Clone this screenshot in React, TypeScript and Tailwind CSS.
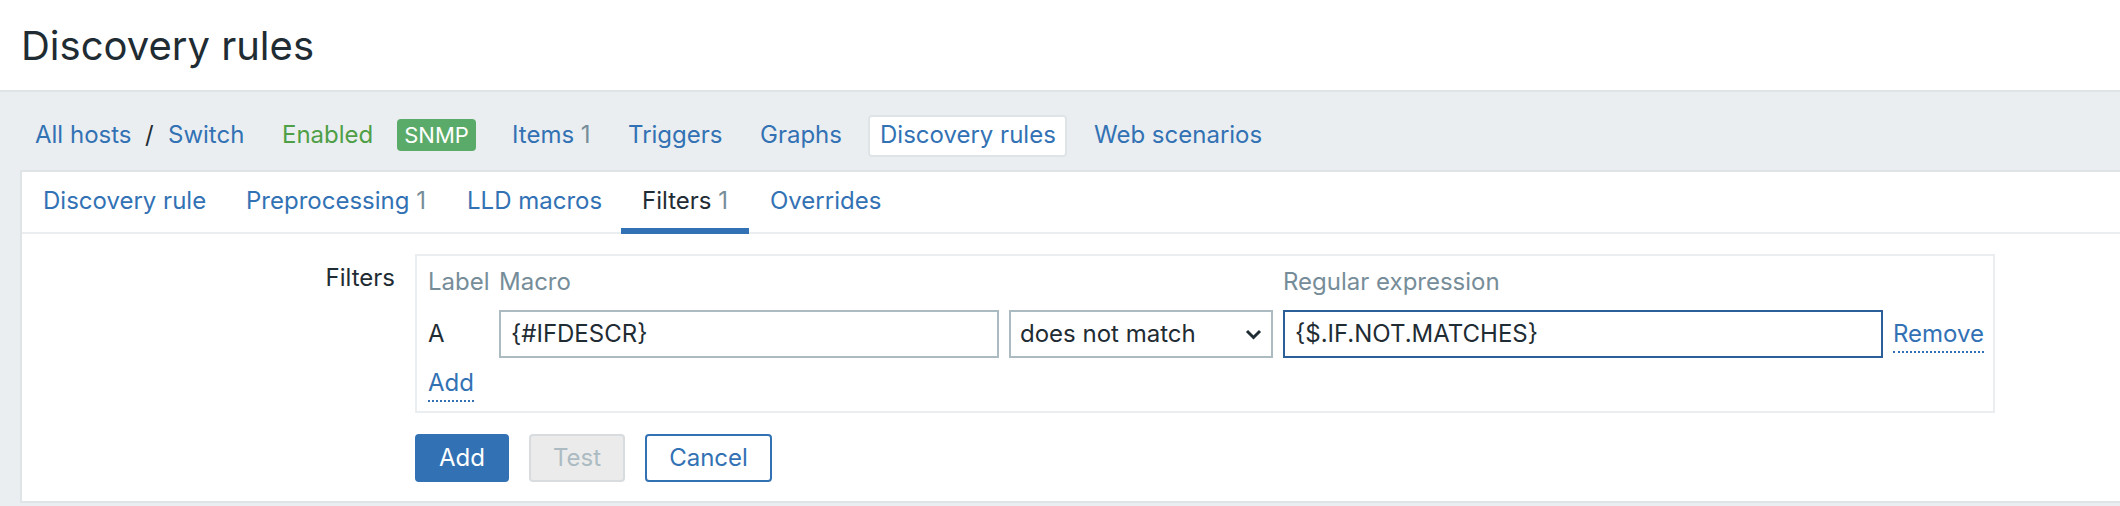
export default function App() {
  return (
    <div className="w-[2120px] h-[506px] overflow-hidden bg-white font-['Inter','Liberation_Sans',sans-serif] text-[24px] leading-[28px] text-[#1f2c33]">
      {/* page title */}
      <header className="h-[90px] pl-[21px] pt-[21px]">
        <h1 className="text-[40px] leading-[50px] font-normal">Discovery rules</h1>
      </header>

      <div className="bg-[#ebeef0] border-t-2 border-[#dfe4e7] h-[416px]">
        {/* host navigation */}
        <nav className="h-[78px] pt-[23px] pl-[35px] flex items-start">
          <a className="w-[110px] pt-[6px] text-[#3272b4]">All hosts</a>
          <span className="w-[23px] pt-[6px]">/</span>
          <a className="w-[114px] pt-[6px] text-[#3272b4]">Switch</a>
          <span className="w-[115px] pt-[6px] text-[#4f9f47]">Enabled</span>
          <span className="w-[79px] h-[32px] mt-[4px] rounded-[4px] bg-[#5aab69] text-white text-[22px] leading-[32px] text-center">
            SNMP
          </span>
          <a className="ml-[36px] w-[116px] pt-[6px] text-[#3272b4]">
            Items <span className="text-[#768d99]">1</span>
          </a>
          <a className="w-[132px] pt-[6px] text-[#3272b4]">Triggers</a>
          <a className="w-[108px] pt-[6px] text-[#3272b4]">Graphs</a>
          <a className="w-[199px] h-[42px] pt-[4px] pl-[10px] bg-white border-2 border-[#dfe4e7] rounded-[4px] text-[#3272b4]">
            Discovery rules
          </a>
          <a className="ml-[27px] pt-[6px] text-[#3272b4]">Web scenarios</a>
        </nav>

        {/* form panel */}
        <div className="ml-[20px] bg-white border-2 border-r-0 border-[#dfe4e7]">
          <ul className="flex items-start border-b-2 border-[#ebeef0]">
            <li className="w-[203px] h-[60px] pt-[15px] pl-[21px] text-[#3272b4]">Discovery rule</li>
            <li className="w-[221px] h-[60px] pt-[15px] pl-[21px] text-[#3272b4]">
              Preprocessing <span className="text-[#768d99]">1</span>
            </li>
            <li className="w-[175px] h-[60px] pt-[15px] pl-[21px] text-[#3272b4]">LLD macros</li>
            <li className="w-[128px] h-[62px] -mb-[2px] pt-[15px] pl-[21px] border-b-[6px] border-[#3272b4]">
              Filters <span className="text-[#768d99]">1</span>
            </li>
            <li className="h-[60px] pt-[15px] pl-[21px] text-[#3272b4]">Overrides</li>
          </ul>

          <div className="pt-[20px] pb-[19px]">
            <div className="grid grid-cols-[373px_1fr] gap-x-[20px]">
              <label className="text-right pt-[10px]">Filters</label>
              <div>
                <div className="w-[1580px] border-2 border-[#ebeef0] pl-[11px] pt-[12px] pb-[14px]">
                  <div className="grid grid-cols-[61px_500px_264px_600px_auto] gap-x-[10px] items-center">
                    <span className="text-[#768d99]">Label</span>
                    <span className="text-[#768d99]">Macro</span>
                    <span />
                    <span className="text-[#768d99]">Regular expression</span>
                    <span />

                    <span className="mt-[14px]">A</span>
                    <div className="mt-[14px] h-[48px] border-2 border-[#acbbc2] px-[10px] flex items-center">
                      {"{#IFDESCR}"}
                    </div>
                    <div className="mt-[14px] h-[48px] border-2 border-[#acbbc2] pl-[9px] pr-[9px] flex items-center justify-between">
                      <span>does not match</span>
                      <svg width="17" height="11" viewBox="0 0 17 11" fill="none">
                        <path d="M2 2l6.5 6.5L15 2" stroke="#1f2c33" strokeWidth="3" />
                      </svg>
                    </div>
                    <div className="mt-[14px] h-[48px] border-2 border-[#2a5f99] px-[10px] flex items-center">
                      {"{$.IF.NOT.MATCHES}"}
                    </div>
                    <span className="mt-[14px]">
                      <a className="text-[#3272b4] pb-[3px] border-b-2 border-dotted border-[#3272b4]">Remove</a>
                    </span>
                  </div>
                  <div className="mt-[11px]">
                    <a className="text-[#3272b4] pb-[3px] border-b-2 border-dotted border-[#3272b4]">Add</a>
                  </div>
                </div>

                <div className="mt-[21px] flex gap-[20px]">
                  <button className="w-[94px] h-[48px] rounded-[4px] bg-[#3272b4] text-white">Add</button>
                  <button className="w-[96px] h-[48px] rounded-[4px] bg-[#ebebeb] border-2 border-[#d9dcde] text-[#acbbc2]">
                    Test
                  </button>
                  <button className="w-[127px] h-[48px] rounded-[4px] bg-white border-2 border-[#3272b4] text-[#3272b4]">
                    Cancel
                  </button>
                </div>
              </div>
            </div>
          </div>
        </div>
      </div>
    </div>
  );
}
